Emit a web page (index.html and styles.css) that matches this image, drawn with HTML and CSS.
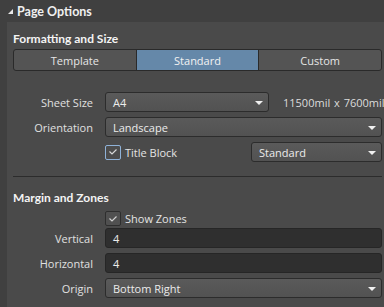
FILE: index.html
```html
<!DOCTYPE html>
<html>
<head>
<meta charset="utf-8">
<link rel="stylesheet" href="styles.css">
</head>
<body>
<div class="panel">
  <div class="header">
    <svg class="tri" width="5" height="5" viewBox="0 0 5 5"><polygon points="5,0 5,5 0,5" fill="#e8e8e8"/></svg>
    <span>Page Options</span>
  </div>
  <div class="body">
    <div class="strip"></div>
    <div class="content">
      <div class="section-title first">Formatting and Size</div>
      <div class="seg">
        <div class="seg-item">Template</div>
        <div class="seg-item active">Standard</div>
        <div class="seg-item">Custom</div>
      </div>
      <div class="form top">
        <div class="label">Sheet Size</div>
        <div class="ctrl-row">
          <div class="select w164"><span>A4</span><i class="arrow"></i></div>
          <span class="dim">11500mil x 7600mil</span>
        </div>
        <div class="label">Orientation</div>
        <div class="select"><span>Landscape</span><i class="arrow"></i></div>
        <div class="label"></div>
        <div class="ctrl-row tb">
          <label class="check"><span class="box focus"><svg width="10" height="8" viewBox="0 0 10 8"><polyline points="1.5,3.5 4,6 8.5,1.5" fill="none" stroke="#d8d8d8" stroke-width="1.2"/></svg></span>Title Block</label>
          <div class="select w131"><span>Standard</span><i class="arrow"></i></div>
        </div>
      </div>
      <div class="sep"></div>
      <div class="section-title second">Margin and Zones</div>
      <div class="zone-check">
        <label class="check"><span class="box"><svg width="10" height="8" viewBox="0 0 10 8"><polyline points="1.5,3.5 4,6 8.5,1.5" fill="none" stroke="#d0d0d0" stroke-width="1.2"/></svg></span>Show Zones</label>
      </div>
      <div class="form zones">
        <div class="label">Vertical</div>
        <div class="input">4</div>
        <div class="label">Horizontal</div>
        <div class="input">4</div>
        <div class="label">Origin</div>
        <div class="select"><span>Bottom Right</span><i class="arrow"></i></div>
      </div>
    </div>
  </div>
</div>
</body>
</html>
```
FILE: styles.css
```css
* { box-sizing: border-box; }
html, body { margin: 0; padding: 0; }
body {
  width: 384px; height: 307px; overflow: hidden;
  background: #4a4a4a;
  font-family: "Open Sans", "Noto Sans", sans-serif;
  font-size: 11px;
  color: #e2e2e2;
}
.panel { width: 384px; height: 307px; display: flex; flex-direction: column; }
.header {
  height: 22px; flex-shrink: 0; background: #404040;
  display: flex; align-items: center;
  padding-left: 8px;
  font-family: Lato, "Open Sans", sans-serif;
  font-weight: 700; font-size: 12.5px; color: #f0f0f0;
}
.header .tri { margin-right: 4px; margin-top: 1px; }
.body { flex: 1; display: flex; min-height: 0; }
.strip { width: 7px; flex-shrink: 0; background: #404040; }
.content { flex: 1; min-width: 0; padding: 0 2px 0 6px; }
.section-title {
  font-family: Lato, "Open Sans", sans-serif;
  font-weight: 700; font-size: 12px; color: #f4f4f4;
  height: 16px; line-height: 16px;
}
.section-title.first { margin-top: 9px; }
.section-title.second { margin-top: 13px; }
.seg {
  margin-top: 2px;
  height: 22px; display: flex;
  border: 1px solid #2a2a2a; border-radius: 3px;
  background: #545454; overflow: hidden;
}
.seg-item {
  flex: 1; display: flex; align-items: center; justify-content: center;
  border-left: 1px solid #2a2a2a; color: #e6e6e6;
}
.seg-item:first-child { border-left: none; }
.seg-item.active { background: #6588a9; color: #f2f2f2; }
.form {
  display: grid; grid-template-columns: 80px 1fr;
  column-gap: 12px; row-gap: 5px; align-items: center;
}
.form.top { margin-top: 21px; }
.label { text-align: right; color: #e0e0e0; }
.ctrl-row { display: flex; align-items: center; min-width: 0; }
.ctrl-row.tb { justify-content: space-between; }
.select {
  height: 20px; border: 1px solid #2c2c2c; border-radius: 3px;
  background: linear-gradient(#5a5a5a, #525252);
  display: flex; align-items: center; justify-content: space-between;
  padding: 0 5px 0 7px; color: #ececec;
}
.select.w164 { width: 164px; flex-shrink: 0; }
.select.w131 { width: 131px; flex-shrink: 0; }
.arrow {
  width: 0; height: 0;
  border-left: 4px solid transparent; border-right: 4px solid transparent;
  border-top: 4px solid #f0f0f0; margin-top: 1px;
}
.dim { margin-left: 14px; color: #dcdcdc; white-space: nowrap; word-spacing: 1px; }
.check { display: flex; align-items: center; color: #e4e4e4; }
.box {
  width: 16px; height: 15px; border-radius: 2px;
  border: 1px solid #2e2e2e; background: #505050;
  display: flex; align-items: center; justify-content: center;
  margin-right: 4px;
}
.box.focus { border-color: #8fb2d8; background: #4c4c4c; }
.sep { height: 1px; background: #2c2c2c; margin-top: 14px; }
.zone-check { margin-top: 5px; padding-left: 92px; height: 15px; display: flex; align-items: center; }
.form.zones { margin-top: 2px; }
.input {
  height: 20px; border: 1px solid #262626; border-radius: 3px;
  background: #2f2f2f; display: flex; align-items: center;
  padding-left: 7px; color: #ececec;
}
```
